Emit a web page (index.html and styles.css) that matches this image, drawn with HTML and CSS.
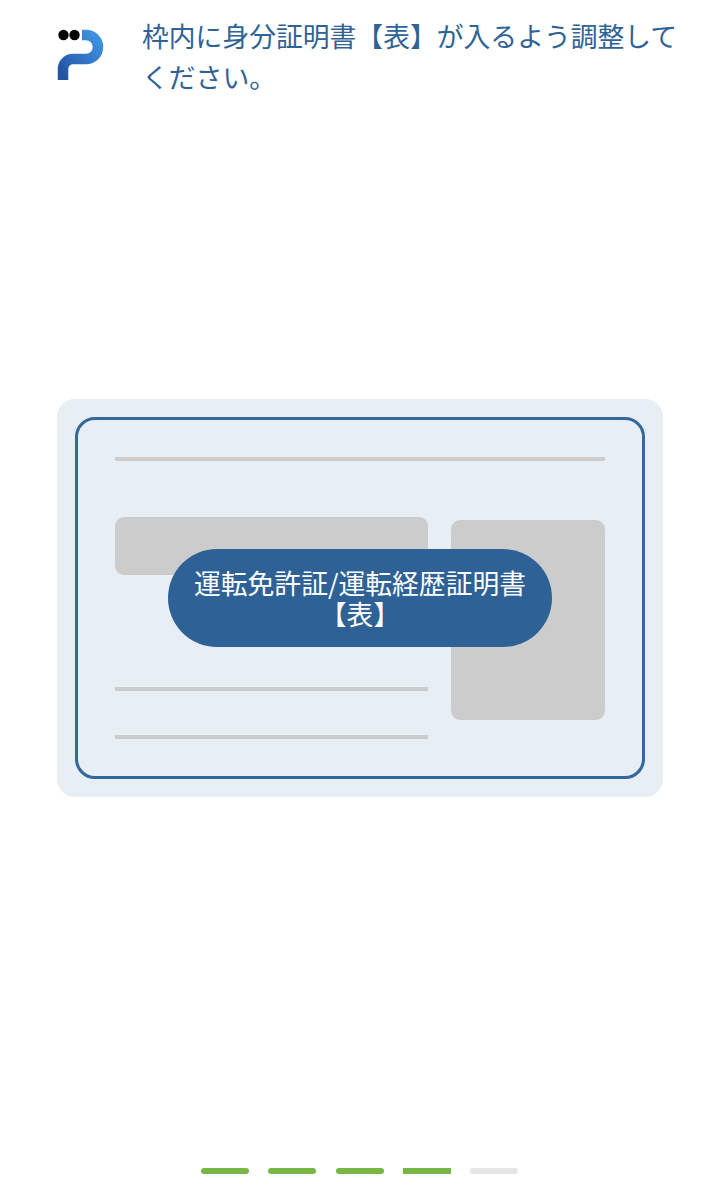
FILE: index.html
```html
<!DOCTYPE html>
<html lang="ja">
<head>
<meta charset="utf-8">
<title>本人確認</title>
<link rel="stylesheet" href="styles.css">
</head>
<body>
<div class="page">
  <header class="header">
    <svg class="logo" viewBox="0 0 50 54" width="50" height="54" aria-hidden="true">
      <defs>
        <linearGradient id="pg" x1="0.9" y1="0" x2="0.1" y2="1">
          <stop offset="0" stop-color="#3f92e0"/>
          <stop offset="1" stop-color="#2353a3"/>
        </linearGradient>
      </defs>
      <circle cx="6.5" cy="7" r="5.2" fill="#050505"/>
      <circle cx="17.5" cy="7" r="5.2" fill="#050505"/>
      <path d="M25 7 H29 A12 12 0 0 1 29 31 H16 A10 10 0 0 0 6 41 V52" fill="none" stroke="url(#pg)" stroke-width="10.5"/>
    </svg>
    <p class="message">枠内に身分証明書【表】が入るよう調整してください。</p>
  </header>

  <main class="card">
    <div class="frame">
      <div class="rule"></div>
      <div class="body">
        <div class="left">
          <div class="block"></div>
          <div class="rule rule-a"></div>
          <div class="rule rule-b"></div>
        </div>
        <div class="photo"></div>
      </div>
      <div class="pill">運転免許証/運転経歴証明書<br>【表】</div>
    </div>
  </main>

  <nav class="progress">
    <span class="step done"></span>
    <span class="step done"></span>
    <span class="step done"></span>
    <span class="step done current"></span>
    <span class="step"></span>
  </nav>
</div>
</body>
</html>
```

FILE: styles.css
```css
* { box-sizing: border-box; }

html, body { margin: 0; padding: 0; background: #fff; }

.page {
  width: 720px;
  height: 1200px;
  display: flex;
  flex-direction: column;
  font-family: "Noto Sans CJK JP", "Noto Sans", sans-serif;
  overflow: hidden;
}

.header {
  display: flex;
  align-items: flex-start;
  height: 399px;
  padding: 15px 36px 0 57px;
}

.logo {
  flex: none;
  margin-top: 13px;
  margin-right: 35px;
}

.message {
  margin: 0;
  font-size: 26.8px;
  line-height: 41px;
  color: #2f6295;
}

.card {
  width: 606px;
  height: 398px;
  margin-left: 57px;
  padding: 18px;
  background: #e7eef4;
  border-radius: 18px;
}

.frame {
  position: relative;
  height: 362px;
  padding: 37px 37px 0;
  border: 3px solid #34679b;
  border-radius: 20px;
}

.rule {
  height: 4px;
  background: #cccccc;
}

.body {
  display: flex;
  gap: 23px;
  margin-top: 56px;
}

.left { width: 313px; }

.block {
  height: 58px;
  background: #cccccc;
  border-radius: 9px;
}

.rule-a { margin-top: 112px; }
.rule-b { margin-top: 44px; }

.photo {
  width: 154px;
  height: 200px;
  margin-top: 3px;
  background: #cccccc;
  border-radius: 9px;
}

.pill {
  position: absolute;
  left: 90px;
  top: 129px;
  width: 384px;
  height: 98px;
  padding-top: 18px;
  border-radius: 49px;
  background: #2e6196;
  color: #fff;
  font-size: 26.8px;
  line-height: 31px;
  text-align: center;
}

.progress {
  display: flex;
  gap: 19.3px;
  margin-top: 371px;
  margin-left: 201px;
}

.step {
  width: 48px;
  height: 6px;
  border-radius: 3px;
  background: #e6e6e6;
}

.step.done { background: #76b843; }
.step.current { border-radius: 0; }
```
